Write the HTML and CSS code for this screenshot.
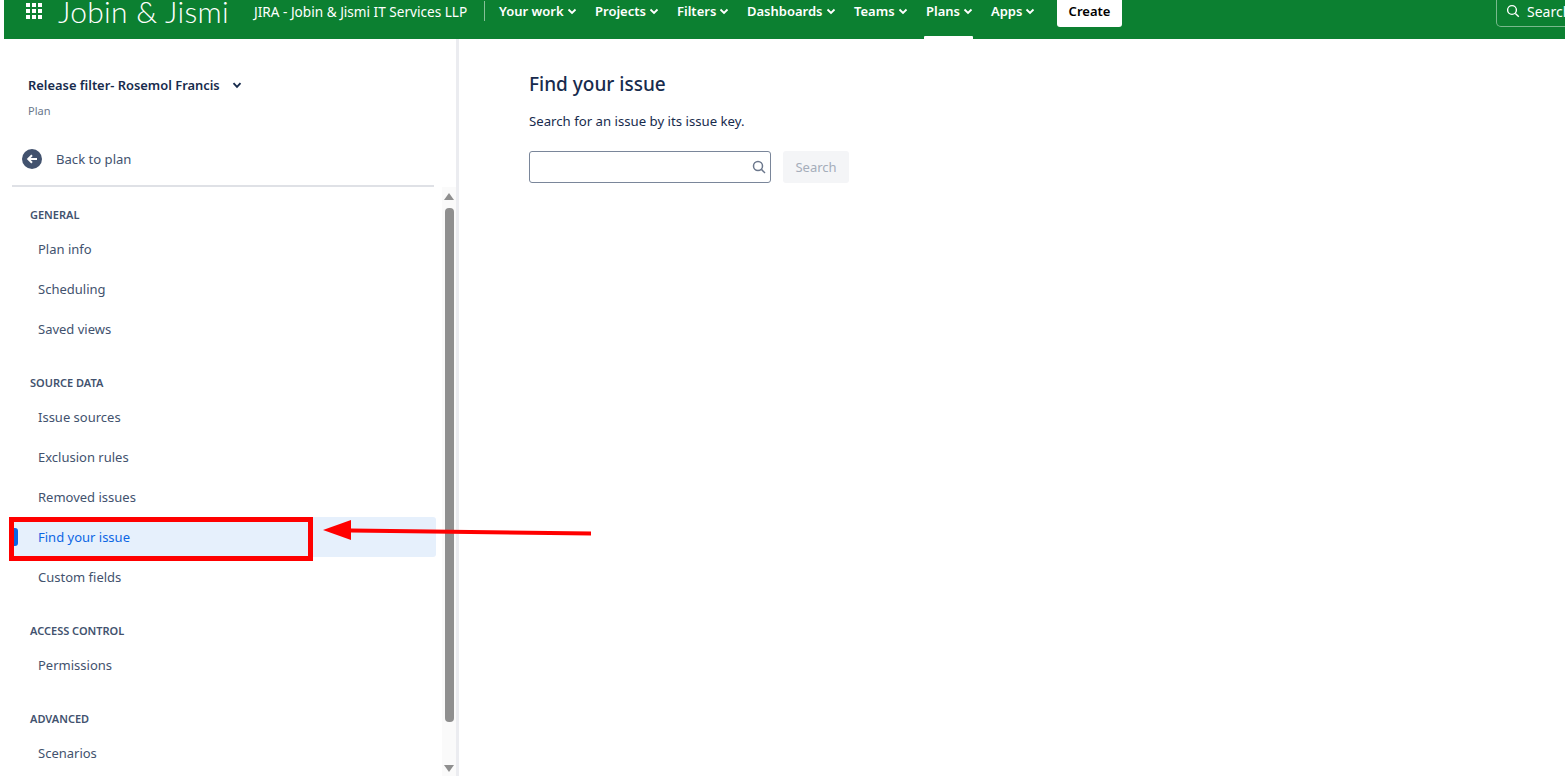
FILE: index.html
```html
<!DOCTYPE html>
<html lang="en">
<head>
<meta charset="utf-8">
<title>Find your issue</title>
<link rel="stylesheet" href="styles.css">
</head>
<body>
<div class="page">
  <header class="topbar">
    <button class="apps-btn" aria-label="Apps">
      <svg width="16" height="16" viewBox="0 0 16 16" fill="#fff"><rect x="0" y="0" width="4" height="4"/><rect x="6" y="0" width="4" height="4"/><rect x="12" y="0" width="4" height="4"/><rect x="0" y="6" width="4" height="4"/><rect x="6" y="6" width="4" height="4"/><rect x="12" y="6" width="4" height="4"/><rect x="0" y="12" width="4" height="4"/><rect x="6" y="12" width="4" height="4"/><rect x="12" y="12" width="4" height="4"/></svg>
    </button>
    <span class="logo">Jobin &amp; Jismi</span>
    <span class="site-title">JIRA - Jobin &amp; Jismi IT Services LLP</span>
    <span class="divider"></span>
    <nav class="topnav">
      <a class="topnav-item w96">Your work<svg class="chev" viewBox="0 0 10 7"><path d="M1.5 1.5 5 5l3.5-3.5"/></svg></a>
      <a class="topnav-item w82">Projects<svg class="chev" viewBox="0 0 10 7"><path d="M1.5 1.5 5 5l3.5-3.5"/></svg></a>
      <a class="topnav-item w70">Filters<svg class="chev" viewBox="0 0 10 7"><path d="M1.5 1.5 5 5l3.5-3.5"/></svg></a>
      <a class="topnav-item w107">Dashboards<svg class="chev" viewBox="0 0 10 7"><path d="M1.5 1.5 5 5l3.5-3.5"/></svg></a>
      <a class="topnav-item w72">Teams<svg class="chev" viewBox="0 0 10 7"><path d="M1.5 1.5 5 5l3.5-3.5"/></svg></a>
      <a class="topnav-item w65 current">Plans<svg class="chev" viewBox="0 0 10 7"><path d="M1.5 1.5 5 5l3.5-3.5"/></svg></a>
      <a class="topnav-item w66">Apps<svg class="chev" viewBox="0 0 10 7"><path d="M1.5 1.5 5 5l3.5-3.5"/></svg></a>
    </nav>
    <button class="create-btn">Create</button>
    <div class="global-search">
      <svg class="global-search-icon" width="14" height="14" viewBox="0 0 14 14" fill="none" stroke="#fff" stroke-width="1.4"><circle cx="6" cy="6" r="4.4"/><path d="m9.4 9.4 3.4 3.4"/></svg>
      <span>Search</span>
    </div>
  </header>

  <div class="body-row">
    <aside class="sidebar">
      <div class="plan-head">
        <div class="plan-name"><span>Release filter- Rosemol Francis</span><svg class="plan-chev" viewBox="0 0 10 7"><path d="M1.5 1.2 5 4.8l3.5-3.6"/></svg></div>
        <div class="plan-type">Plan</div>
      </div>
      <a class="back-link">
        <svg width="20" height="20" viewBox="0 0 20 20"><circle cx="10" cy="10" r="10" fill="#42526e"/><path d="M15 10H7M10 6.2 6.2 10l3.8 3.8" fill="none" stroke="#fff" stroke-width="2"/></svg>
        <span>Back to plan</span>
      </a>
      <div class="sep"></div>
      <div class="scroll-area">
        <div class="menu">
          <h4 class="menu-title first">General</h4>
          <a class="menu-item">Plan info</a>
          <a class="menu-item">Scheduling</a>
          <a class="menu-item">Saved views</a>
          <h4 class="menu-title">Source data</h4>
          <a class="menu-item">Issue sources</a>
          <a class="menu-item">Exclusion rules</a>
          <a class="menu-item">Removed issues</a>
          <a class="menu-item active">Find your issue</a>
          <a class="menu-item">Custom fields</a>
          <h4 class="menu-title">Access control</h4>
          <a class="menu-item">Permissions</a>
          <h4 class="menu-title">Advanced</h4>
          <a class="menu-item">Scenarios</a>
        </div>
        <div class="scrollbar">
          <span class="arrow-up"></span>
          <span class="thumb"></span>
          <span class="arrow-down"></span>
        </div>
      </div>
    </aside>
    <main class="content">
      <h1 class="title">Find your issue</h1>
      <p class="lead">Search for an issue by its issue key.</p>
      <div class="search-row">
        <div class="search-input">
          <svg width="14" height="14" viewBox="0 0 14 14" fill="none" stroke="#6b778c" stroke-width="1.5"><circle cx="6" cy="6" r="4.5"/><path d="m9.4 9.4 3.6 3.6"/></svg>
        </div>
        <button class="search-btn" disabled>Search</button>
      </div>
    </main>
  </div>

  <div class="callout-box"></div>
  <svg class="callout-arrow" width="280" height="30" viewBox="0 0 280 30"><path d="M28 12.5 268 15.5V19.5L28 16.5Z" fill="#f00"/><path d="M0 14 28 4V24Z" fill="#f00"/></svg>
</div>
</body>
</html>
```

FILE: styles.css
```css
* { box-sizing: border-box; }
html, body { margin: 0; height: 100%; background: #fff; overflow: hidden; }
body { font-family: "Noto Sans", "Open Sans", sans-serif; color: #172b4d; }
a { text-decoration: none; color: inherit; }
button { font-family: inherit; border: 0; }

.page { position: relative; width: 1565px; height: 776px; padding-left: 4px; overflow: hidden; }

.topbar {
  height: 56px; margin-top: -17px; background: #0c8031; color: #fff;
  display: flex; align-items: center; white-space: nowrap;
}
.apps-btn { background: none; padding: 0; margin-left: 22px; width: 16px; height: 16px; display: flex; }
.logo { font-family: Lato, sans-serif; font-weight: 300; font-size: 30px; letter-spacing: .3px; margin-left: 16px; width: 196px; line-height: 1; flex: none; }
.site-title { font-size: 13.6px; width: 230px; flex: none; }
.divider { width: 1px; height: 20px; background: rgba(255,255,255,.5); flex: none; }
.topnav { display: flex; margin-left: 14px; height: 56px; }
.topnav-item { position: relative; display: flex; align-items: center; font-size: 13px; font-weight: 600; }
.w96 { width: 96px; } .w82 { width: 82px; } .w70 { width: 70px; } .w107 { width: 107px; }
.w72 { width: 72px; } .w65 { width: 65px; } .w66 { width: 66px; }
.chev { width: 10px; height: 7px; margin-left: 3px; fill: none; stroke: #fff; stroke-width: 1.8; }
.current::after { content: ""; position: absolute; left: -2px; width: 49px; bottom: 0; height: 3px; background: #fff; border-radius: 1px 1px 0 0; }
.create-btn { width: 65px; height: 32px; background: #fff; color: #000; border-radius: 3px; font-size: 13px; font-weight: 600; padding: 0; flex: none; }
.global-search {
  margin-left: 374px; width: 69px; height: 32px; flex: none; overflow: hidden;
  border: 1px solid rgba(255,255,255,.45); border-right: 0; border-radius: 5px 0 0 5px;
  display: flex; align-items: center; gap: 7px; padding-left: 9px; font-size: 14px;
}
.global-search-icon { flex: none; }

.body-row { display: flex; height: 737px; }
.sidebar { width: 455px; flex: none; border-right: 3px solid #ebecf0; display: flex; flex-direction: column; }
.plan-head { padding: 36px 0 0 24px; height: 102px; }
.plan-name { display: flex; align-items: center; font-size: 12.9px; font-weight: 600; color: #172b4d; line-height: 20px; }
.plan-chev { width: 10px; height: 7px; margin-left: 12px; fill: none; stroke: #172b4d; stroke-width: 1.9; }
.plan-type { font-size: 11px; color: #6b778c; line-height: 16px; margin-top: 8px; }
.back-link { display: flex; align-items: center; gap: 14px; margin-left: 18px; height: 36px; font-size: 13.1px; color: #42526e; }
.sep { height: 2px; margin: 8px 22px 0 8px; background: #dfe1e6; flex: none; }

.scroll-area { flex: 1; display: flex; min-height: 0; overflow: hidden; }
.menu { width: 432px; flex: none; padding-left: 9px; }
.menu-title { height: 20px; line-height: 20px; padding: 0 0 0 17px; margin: 24px 0 4px; font-size: 11px; font-weight: 600; text-transform: uppercase; color: #42526e; }
.menu-title.first { margin-top: 18px; }
.menu-item { position: relative; display: flex; align-items: center; height: 40px; padding-left: 25px; font-size: 13px; color: #42526e; border-radius: 3px; }
.menu-item.active { background: #e6f0fc; color: #0c66e4; }
.menu-item.active::before { content: ""; position: absolute; left: 0; top: 11px; width: 5px; height: 18px; background: #0c66e4; border-radius: 0 3px 3px 0; }

.scrollbar { width: 14px; margin-left: 6px; background: #fafafa; display: flex; flex-direction: column; align-items: center; height: 589px; flex: none; }
.arrow-up, .arrow-down { width: 0; height: 0; border-left: 5px solid transparent; border-right: 5px solid transparent; flex: none; }
.arrow-up { border-bottom: 7px solid #8f8f8f; margin-top: 6px; }
.thumb { width: 9px; height: 514px; margin-top: 8px; background: #8f8f8f; border-radius: 4px; flex: none; }
.arrow-down { border-top: 7px solid #8f8f8f; margin-top: 43px; }

.content { flex: 1; padding-left: 70px; }
.title { margin: 31px 0 0; font-size: 19px; font-weight: 500; line-height: 28px; color: #172b4d; }
.lead { margin: 13px 0 0; font-size: 13.2px; line-height: 20px; color: #172b4d; }
.search-row { display: flex; gap: 12px; margin-top: 20px; }
.search-input { width: 242px; height: 32px; border: 1px solid #7a869a; border-radius: 3px; background: #fff; display: flex; align-items: center; justify-content: flex-end; padding-right: 4px; }
.search-btn { width: 66px; height: 32px; background: #f4f5f7; color: #a5adba; border-radius: 3px; font-size: 13px; padding: 0; }

.callout-box { position: absolute; left: 9px; top: 517px; width: 304px; height: 44px; border: 5px solid #f00; }
.callout-arrow { position: absolute; left: 323px; top: 516px; }
```
